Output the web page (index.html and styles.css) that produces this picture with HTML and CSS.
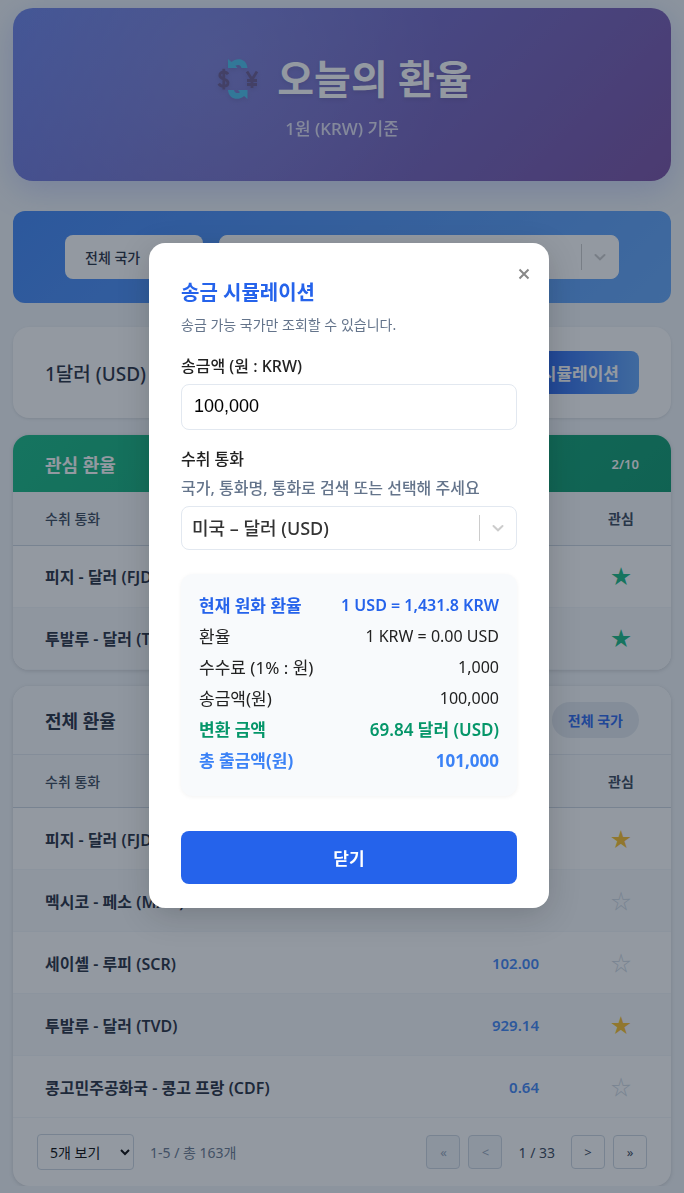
FILE: index.html
```html
<!DOCTYPE html>
<html lang="ko">
<head>
<meta charset="utf-8">
<meta name="viewport" content="width=device-width, initial-scale=1">
<title>오늘의 환율</title>
<link rel="stylesheet" href="styles.css">
</head>
<body>
<div class="page">
  <header class="hero">
    <h1 class="hero-title">
      <svg class="hero-icon" viewBox="0 0 40 40" aria-hidden="true">
        <g fill="none" stroke="#67558f" stroke-width="2.8">
          <path d="M10 15.200C9 13.600 7.500 13 5.800 13c-2.300 0-4 1.200-4 3.300 0 4.900 8.200 2.600 8.200 7.400 0 2.300-2 3.500-4.400 3.500-2 0-3.700-.8-4.900-2.600M5.800 9.800v20.800"/>
          <path d="M29 12.500l5 8L39 12.500M34 20.500V29M29 21.500h10M29 25.500h10"/>
        </g>
        <g fill="#45c0ee">
          <path d="M10 0l3.400 3C18 -1.500 28.500 -1.500 29.500 9h-6c-.8-3.400-3.500-3.800-6-2.200L19.500 9H10z"/>
          <path d="M29.500 40l0-9H20l2 2.200c-2.500 1.600-5.200 1.200-6-2.200h-6c1 10.500 11.500 10.500 16.100 6z"/>
        </g>
      </svg>
      <span>오늘의 환율</span>
    </h1>
    <p class="hero-sub">1원 (KRW) 기준</p>
  </header>

  <section class="filter">
    <button class="filter-all" type="button">전체 국가</button>
    <div class="picker picker-plain">
      <select class="picker-input" aria-label="통화 검색"><option></option></select>
      <span class="picker-mark" aria-hidden="true"><svg viewBox="0 0 20 20"><path d="M5.500 8L10 12.300l4.500-4.300"/></svg></span>
    </div>
  </section>

  <section class="summary">
    <strong class="summary-text">1달러 (USD)</strong>
    <button class="summary-button" type="button">송금 시뮬레이션</button>
  </section>

  <section class="card">
    <div class="card-head card-head-green">
      <h2 class="card-title">관심 환율</h2>
      <span class="count">2/10</span>
    </div>
    <table class="rates">
      <thead><tr><th>수취 통화</th><th class="value"></th><th class="fav">관심</th></tr></thead>
      <tbody>
        <tr><td>피지 - 달러 (FJD)</td><td class="value"></td><td class="fav"><button class="star star-green" type="button" aria-label="관심 해제">★</button></td></tr>
        <tr><td>투발루 - 달러 (TVD)</td><td class="value"></td><td class="fav"><button class="star star-green" type="button" aria-label="관심 해제">★</button></td></tr>
      </tbody>
    </table>
  </section>

  <section class="card">
    <div class="card-head">
      <h2 class="card-title">전체 환율</h2>
      <button class="chip" type="button">전체 국가</button>
    </div>
    <table class="rates">
      <thead><tr><th>수취 통화</th><th class="value"></th><th class="fav">관심</th></tr></thead>
      <tbody>
        <tr><td>피지 - 달러 (FJD)</td><td class="value"></td><td class="fav"><button class="star star-gold" type="button" aria-label="관심 해제">★</button></td></tr>
        <tr><td>멕시코 - 페소 (MXN)</td><td class="value"></td><td class="fav"><button class="star" type="button" aria-label="관심 등록">☆</button></td></tr>
        <tr><td>세이셸 - 루피 (SCR)</td><td class="value">102.00</td><td class="fav"><button class="star" type="button" aria-label="관심 등록">☆</button></td></tr>
        <tr><td>투발루 - 달러 (TVD)</td><td class="value">929.14</td><td class="fav"><button class="star star-gold" type="button" aria-label="관심 해제">★</button></td></tr>
        <tr><td>콩고민주공화국 - 콩고 프랑 (CDF)</td><td class="value">0.64</td><td class="fav"><button class="star" type="button" aria-label="관심 등록">☆</button></td></tr>
      </tbody>
    </table>
    <div class="pager">
      <select class="page-size" aria-label="페이지 크기"><option>5개 보기</option></select>
      <span class="range">1-5 / 총 163개</span>
      <nav class="page-nav" aria-label="페이지">
        <button class="page-button" type="button" disabled>«</button>
        <button class="page-button" type="button" disabled>&lt;</button>
        <span class="page-now">1 / 33</span>
        <button class="page-button" type="button">&gt;</button>
        <button class="page-button" type="button">»</button>
      </nav>
    </div>
  </section>
</div>

<div class="overlay">
  <div class="modal" role="dialog" aria-modal="true" aria-labelledby="modal-title">
    <button class="modal-x" type="button" aria-label="닫기"><svg viewBox="0 0 12 12" aria-hidden="true"><path d="M1.500 1.500l9 9M10.500 1.500l-9 9"/></svg></button>
    <h2 class="modal-title" id="modal-title">송금 시뮬레이션</h2>
    <p class="modal-desc">송금 가능 국가만 조회할 수 있습니다.</p>
    <div class="field field-amount">
      <label class="label" for="amount">송금액 (원 : KRW)</label>
      <input class="amount" id="amount" type="text" value="100,000">
    </div>
    <div class="field">
      <label class="label" for="currency">수취 통화</label>
      <p class="hint">국가, 통화명, 통화로 검색 또는 선택해 주세요</p>
      <div class="picker">
        <select class="picker-input" id="currency"><option>미국 – 달러 (USD)</option></select>
        <span class="picker-mark" aria-hidden="true"><svg viewBox="0 0 20 20"><path d="M5.500 8L10 12.300l4.500-4.300"/></svg></span>
      </div>
    </div>
    <dl class="result">
      <div class="line line-rate"><dt>현재 원화 환율</dt><dd>1 USD = 1,431.8 KRW</dd></div>
      <div class="line"><dt>환율</dt><dd>1 KRW = 0.00 USD</dd></div>
      <div class="line"><dt>수수료 (1% : 원)</dt><dd>1,000</dd></div>
      <div class="line"><dt>송금액(원)</dt><dd>100,000</dd></div>
      <div class="line line-converted"><dt>변환 금액</dt><dd>69.84 달러 (USD)</dd></div>
      <div class="line line-total"><dt>총 출금액(원)</dt><dd>101,000</dd></div>
    </dl>
    <button class="modal-close" type="button">닫기</button>
  </div>
</div>
</body>
</html>
```

FILE: styles.css
```css
* { box-sizing: border-box; }

body {
  margin: 0;
  background: #f1f5f9;
  color: #1e293b;
  font-family: "Noto Sans", "Noto Sans CJK KR", sans-serif;
  font-size: 15px;
}

h1, h2, p, dl, dd { margin: 0; }

button, select, input { font-family: inherit; }

.page { padding: 8px 13px 0; }

.hero {
  padding: 36px 24px;
  height: 173px;
  border-radius: 20px;
  background:
    radial-gradient(circle at 30% 30%, rgba(255, 255, 255, 0.1), transparent 50%),
    linear-gradient(135deg, #667eea 0%, #764ba2 100%);
  box-shadow: 0 8px 32px rgba(102, 126, 234, 0.3);
  color: #fff;
  text-align: center;
}

.hero-title {
  display: flex;
  justify-content: center;
  align-items: center;
  gap: 19px;
  padding-left: 6px;
  font-size: 40px;
  line-height: 70px;
  text-shadow: 0 2px 4px rgba(0, 0, 0, 0.1);
}

.hero-icon {
  width: 40px;
  height: 40px;
  overflow: visible;
  filter: drop-shadow(0 2px 2px rgba(0, 0, 0, 0.1));
}

.hero-sub {
  font-size: 17px;
  font-weight: 500;
  line-height: 30px;
  opacity: 0.8;
}

.filter {
  display: flex;
  justify-content: center;
  gap: 16px;
  margin-top: 30px;
  padding: 24px;
  border-radius: 12px;
  background: linear-gradient(135deg, #3b82f6, #60a5fa);
}

.filter-all {
  width: 138px;
  height: 44px;
  padding: 0 20px;
  border: 0;
  border-radius: 8px;
  background: #fff;
  color: #1e293b;
  font-size: 14px;
  font-weight: 500;
  text-align: left;
}

.picker {
  position: relative;
  height: 44px;
  border: 1px solid #e2e8f0;
  border-radius: 8px;
  background: #fff;
}

.picker-plain {
  width: 400px;
  border-color: #fff;
}

.picker-input {
  width: 100%;
  height: 100%;
  padding: 0 48px 0 10px;
  border: 0;
  background: none;
  appearance: none;
  color: #333;
  font-size: 18px;
  font-weight: 500;
}

.picker-mark {
  position: absolute;
  top: 8px;
  bottom: 8px;
  right: 0;
  display: flex;
  align-items: center;
  padding: 0 8px;
  border-left: 1px solid #ccc;
  pointer-events: none;
}

.picker-mark svg {
  width: 20px;
  height: 20px;
  fill: none;
  stroke: #ccc;
  stroke-width: 2;
  stroke-linecap: round;
}

.summary {
  display: flex;
  justify-content: space-between;
  align-items: center;
  margin-top: 24px;
  padding: 24px 32px;
  border-radius: 16px;
  background: #fff;
  box-shadow: 0 1px 3px rgba(0, 0, 0, 0.1);
}

.summary-text {
  font-size: 19px;
  font-weight: 500;
}

.summary-button {
  height: 43px;
  padding: 0 20px;
  border: 0;
  border-radius: 8px;
  background: linear-gradient(90deg, #2563eb 40%, #60a5fa);
  color: #fff;
  font-size: 17px;
  font-weight: 700;
}

.card {
  margin-top: 17px;
  border-radius: 16px;
  background: #fff;
  box-shadow: 0 1px 4px rgba(0, 0, 0, 0.15);
  overflow: hidden;
}

.card + .card { margin-top: 16px; }

.card-head {
  display: flex;
  justify-content: space-between;
  align-items: center;
  height: 69px;
  padding: 0 32px;
  border-bottom: 1px solid #e2e8f0;
  background: #fafcfe;
}

.card-head-green {
  height: 57px;
  border-bottom: 0;
  background: linear-gradient(135deg, #10b981, #059669);
  color: #fff;
}

.card-title {
  font-size: 18px;
  font-weight: 700;
}

.count {
  font-size: 13px;
  font-weight: 600;
}

.chip {
  height: 36px;
  padding: 0 16px;
  border: 0;
  border-radius: 18px;
  background: #e2e8f0;
  color: #2563eb;
  font-size: 14px;
  font-weight: 600;
}

.rates {
  width: 100%;
  table-layout: fixed;
  border-collapse: collapse;
}

.rates th {
  height: 53px;
  padding: 0 32px;
  border-bottom: 1px solid #cbd5e1;
  background: #f8fafc;
  color: #334155;
  font-size: 14px;
  font-weight: 500;
  text-align: left;
}

.rates th.fav { font-weight: 600; }

.rates td {
  height: 62px;
  padding: 0 32px;
  border-bottom: 1px solid #f1f5f9;
  font-size: 16px;
  font-weight: 600;
}

.rates tr:nth-child(even) td { background: #f8fafc; }

.rates .value {
  width: 198px;
  font-size: 15px;
  text-align: right;
}

.rates td.value { color: #3b82f6; }

.rates .fav {
  width: 100px;
  padding: 0;
  text-align: center;
}

.star {
  padding: 0;
  border: 0;
  background: none;
  color: #cbd5e1;
  font-family: "Noto Sans CJK KR", sans-serif;
  font-size: 20px;
  line-height: 32px;
}

.star-green { color: #10b981; }
.star-gold { color: #fbbf24; }

.pager {
  display: flex;
  align-items: center;
  padding: 16px 24px;
}

.page-size {
  width: 97px;
  height: 36px;
  padding: 0 8px;
  border: 1px solid #cbd5e1;
  border-radius: 4px;
  background: #fff;
  color: #000;
  font-size: 14px;
}

.range {
  margin-left: 16px;
  color: #64748b;
  font-size: 14px;
}

.page-nav {
  display: flex;
  align-items: center;
  gap: 8px;
  margin-left: auto;
}

.page-button {
  width: 34px;
  height: 34px;
  padding: 0;
  border: 1px solid #cbd5e1;
  border-radius: 4px;
  background: #fff;
  color: #334155;
  font-size: 13px;
}

.page-button:disabled {
  background: #f1f5f9;
  color: #94a3b8;
}

.page-now {
  padding: 0 8px;
  color: #334155;
  font-size: 14px;
}

.overlay {
  position: fixed;
  inset: 0;
  display: flex;
  justify-content: center;
  align-items: center;
  padding: 0 0 42px 14px;
  background: rgba(30, 41, 59, 0.48);
}

.modal {
  position: relative;
  width: 400px;
  padding: 32px 32px 24px;
  border-radius: 16px;
  background: #fff;
  box-shadow: 0 8px 32px rgba(0, 0, 0, 0.18);
  color: #222;
}

.modal-x {
  position: absolute;
  top: 20px;
  right: 14px;
  display: grid;
  place-items: center;
  width: 22px;
  height: 22px;
  padding: 0;
  border: 0;
  background: none;
}

.modal-x svg {
  width: 12px;
  height: 12px;
  stroke: #888;
  stroke-width: 2;
}

.modal-title {
  color: #2563eb;
  font-size: 20px;
  line-height: 36px;
}

.modal-desc {
  color: #64748b;
  font-size: 14px;
  line-height: 28px;
}

.field { margin-top: 14px; }

.field-amount {
  display: grid;
  gap: 3px;
  margin-top: 12px;
}

.label {
  display: block;
  font-size: 16px;
  font-weight: 500;
  line-height: 30px;
}

.amount {
  display: block;
  width: 100%;
  height: 46px;
  padding: 0 12px 2px;
  border: 1px solid #e2e8f0;
  border-radius: 8px;
  color: #000;
  font-family: "Liberation Sans", sans-serif;
  font-size: 18px;
}

.hint {
  margin-bottom: 4px;
  color: #64748b;
  font-size: 16px;
  font-weight: 500;
  line-height: 28px;
}

.result {
  margin-top: 24px;
  padding: 16px 18px 20px;
  border-radius: 12px;
  background: #f8fafc;
  box-shadow: 0 1px 4px rgba(0, 0, 0, 0.05);
}

.line {
  display: flex;
  justify-content: space-between;
  font-size: 17px;
  line-height: 31px;
}

.line dd { font-size: 16px; }

.line-rate {
  color: #2563eb;
  font-weight: 600;
}

.line-converted {
  color: #059669;
  font-weight: 600;
}

.line-total {
  color: #3b82f6;
  font-weight: 700;
}

.line-converted dd,
.line-total dd { font-size: 17px; }

.modal-close {
  display: block;
  width: 100%;
  height: 53px;
  margin-top: 35px;
  border: 0;
  border-radius: 8px;
  background: #2563eb;
  color: #fff;
  font-size: 17px;
  font-weight: 700;
}
```
